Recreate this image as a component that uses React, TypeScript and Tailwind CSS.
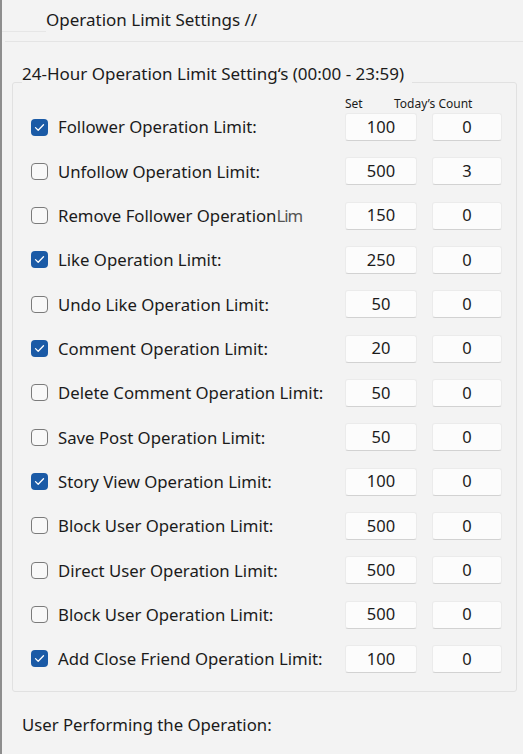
import React from "react";

type Row = { label: string; checked: boolean; set: string; count: string; tail?: string };

const rows: Row[] = [
  { label: "Follower Operation Limit:", checked: true, set: "100", count: "0" },
  { label: "Unfollow Operation Limit:", checked: false, set: "500", count: "3" },
  { label: "Remove Follower Operation", checked: false, set: "150", count: "0", tail: "Lim" },
  { label: "Like Operation Limit:", checked: true, set: "250", count: "0" },
  { label: "Undo Like Operation Limit:", checked: false, set: "50", count: "0" },
  { label: "Comment Operation Limit:", checked: true, set: "20", count: "0" },
  { label: "Delete Comment Operation Limit:", checked: false, set: "50", count: "0" },
  { label: "Save Post Operation Limit:", checked: false, set: "50", count: "0" },
  { label: "Story View Operation Limit:", checked: true, set: "100", count: "0" },
  { label: "Block User Operation Limit:", checked: false, set: "500", count: "0" },
  { label: "Direct User Operation Limit:", checked: false, set: "500", count: "0" },
  { label: "Block User Operation Limit:", checked: false, set: "500", count: "0" },
  { label: "Add Close Friend Operation Limit:", checked: true, set: "100", count: "0" },
];

function Check({ checked }: { checked: boolean }) {
  if (checked) {
    return (
      <div className="w-[17px] h-[17px] rounded-[4px] bg-[#1a5aa6] flex items-center justify-center shrink-0">
        <svg width="11" height="9" viewBox="0 0 11 9" fill="none">
          <path d="M1.5 4.6 L4.2 7.2 L9.5 1.8" stroke="white" strokeWidth="1.3" strokeLinecap="round" strokeLinejoin="round" />
        </svg>
      </div>
    );
  }
  return <div className="w-[17px] h-[17px] rounded-[4px] border border-[#7b7b7b] bg-[#f8f8f8] shrink-0" />;
}

function Box({ v, w }: { v: string; w: string }) {
  return (
    <div
      className={`${w} h-[28px] bg-[#fcfcfc] border border-[#ebebeb] border-b-[#d2d2d2] rounded-[3px] flex items-center justify-center text-[16.5px] text-[#1b1b1b]`}
    >
      {v}
    </div>
  );
}

export default function App() {
  return (
    <div
      className="w-[523px] h-[754px] bg-[#f3f3f3] border-l-2 border-[#8e8e8e] overflow-hidden text-[#1b1b1b]"
      style={{ fontFamily: '"Noto Sans", "Open Sans", sans-serif' }}
    >
      <div className="h-[32px] pt-[8px] leading-[24px] pl-[44px] text-[17px] border-b border-[#e6e6e6] w-[40px] whitespace-nowrap">
        Operation Limit Settings //
      </div>
      <div className="h-[10px] ml-[3px] border-b border-[#e4e4e4]" />
      <fieldset className="ml-[10px] mr-[6px] mt-[24px] border border-[#e1e1e1] rounded-[3px] h-[626px]">
        <legend className="ml-[9px] pr-[8px] pb-[16px] text-[17px] leading-[16px] whitespace-nowrap">
          24-Hour Operation Limit Setting‘s (00:00 - 23:59)
        </legend>
        <div className="flex text-[12px] leading-[16px] h-[16px] -mt-[2px]">
          <div className="ml-[332px] w-[49px]">Set</div>
          <div>Today’s Count</div>
        </div>
        <div className="flex flex-col gap-[14.33px]">
          {rows.map((r, i) => (
            <div key={i} className="h-[30px] flex items-center pl-[18px]">
              <Check checked={r.checked} />
              <div className="ml-[10px] w-[287px] text-[16.75px] whitespace-nowrap">
                {r.label}
                {r.tail ? <span className="text-[#555] tracking-[-1px]">{r.tail}</span> : null}
              </div>
              <Box v={r.set} w="w-[72px]" />
              <div className="w-[15px]" />
              <Box v={r.count} w="w-[70px]" />
            </div>
          ))}
        </div>
      </fieldset>
      <div className="ml-[20px] mt-[23px] text-[16.75px] leading-[20px]">User Performing the Operation:</div>
    </div>
  );
}
